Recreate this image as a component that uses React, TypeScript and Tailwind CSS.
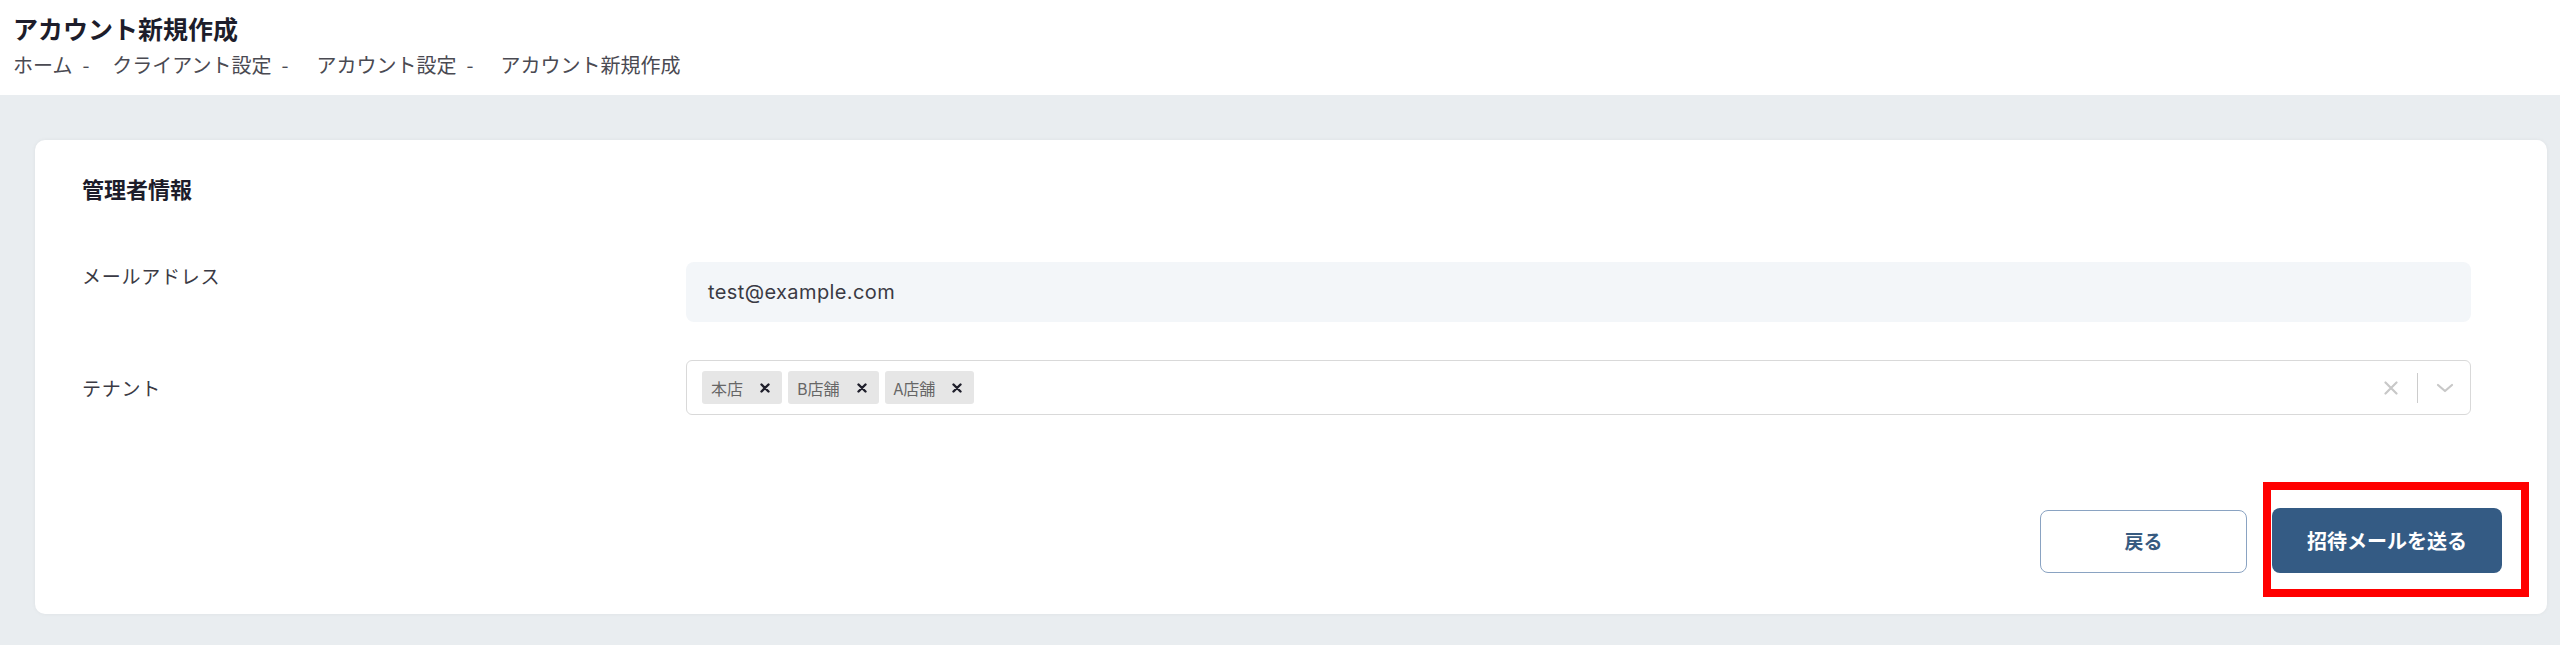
import React from 'react';

const tenants = ['本店', 'B店舗', 'A店舗'];

function ChipClose() {
    return (
        <svg width="10" height="10" viewBox="0 0 10 10" className="shrink-0">
            <path d="M1.5 1.5 L8.5 8.5 M8.5 1.5 L1.5 8.5" stroke="#1f1f2b" strokeWidth="2.4" strokeLinecap="round" />
        </svg>
    );
}

function TenantSelect() {
    return (
        <div className="flex-1 h-[55px] flex items-center border border-[#d9d9d9] rounded-[6px] bg-white pl-[15px] pr-[16px]">
            <div className="flex-1 flex items-center gap-[6px]">
                {tenants.map((t) => (
                    <span
                        key={t}
                        className="h-[33px] flex items-center bg-[#e6e6e6] rounded-[3px] pl-[9px] pr-[12px] text-[16px] text-[#666]"
                    >
                        <span className="mr-[17px]">{t}</span>
                        <ChipClose />
                    </span>
                ))}
            </div>
            {/* clear + dropdown indicators */}
            <svg width="14" height="14" viewBox="0 0 14 14" className="shrink-0">
                <path d="M1.5 1.5 L12.5 12.5 M12.5 1.5 L1.5 12.5" stroke="#c8c8c8" strokeWidth="2.2" strokeLinecap="round" />
            </svg>
            <span className="w-px h-[30px] bg-[#cccccc] ml-[19px] mr-[18px]" />
            <svg width="18" height="10" viewBox="0 0 18 10" className="shrink-0">
                <path d="M2 2 L9 8 L16 2" stroke="#c8c8c8" strokeWidth="2.2" fill="none" strokeLinecap="round" strokeLinejoin="round" />
            </svg>
        </div>
    );
}

export default function App() {
    return (
        <div
            className="w-[2560px] h-[645px] flex flex-col bg-[#e9edf0] text-[#2a2a35]"
            style={{ fontFamily: '"Noto Sans CJK JP", "Noto Sans", sans-serif' }}
        >
            <header className="h-[95px] shrink-0 bg-white pl-[13px] pt-[10px]">
                <h1 className="text-[25px] leading-[36px] font-bold text-[#1d1d2b]">アカウント新規作成</h1>
                <nav className="mt-[5px] text-[20px] leading-[28px] text-[#4a4a52] flex">
                    <span>ホーム</span>
                    <span className="ml-[10px] mr-[23px]">-</span>
                    <span>クライアント設定</span>
                    <span className="ml-[10px] mr-[28px]">-</span>
                    <span>アカウント設定</span>
                    <span className="ml-[10px] mr-[27px]">-</span>
                    <span>アカウント新規作成</span>
                </nav>
            </header>

            <main className="flex-1 pl-[35px] pr-[13px] pt-[45px] pb-[31px]">
                <section className="h-full bg-white rounded-[10px] shadow-[0_0_4px_rgba(0,0,0,0.05)] pl-[47px] pr-[45px] pt-[32px] pb-[41px] flex flex-col">
                    <h2 className="text-[22px] leading-[32px] font-bold text-[#1d1d2b]">管理者情報</h2>

                    <div className="mt-[58px] pr-[31px] flex items-start">
                        <div className="w-[604px] shrink-0 text-[19px] leading-[28px] tracking-[0.04em] text-[#3a3a44]">
                            メールアドレス
                        </div>
                        <div className="flex-1 h-[60px] flex items-center bg-[#f3f6f9] rounded-[8px] pl-[22px]">
                            <span className="text-[20px] tracking-[0.02em] text-[#3a3a44]" style={{ fontFamily: 'Inter, "Noto Sans", sans-serif' }}>
                                test@example.com
                            </span>
                        </div>
                    </div>

                    <div className="mt-[38px] pr-[31px] flex items-center">
                        <div className="w-[604px] shrink-0 text-[19px] leading-[28px] tracking-[0.04em] text-[#3a3a44]">
                            テナント
                        </div>
                        <TenantSelect />
                    </div>

                    <div className="mt-auto flex justify-end items-end gap-[25px]">
                        <button className="w-[207px] h-[63px] rounded-[8px] border border-[#8aa3c2] bg-white text-[19px] font-bold text-[#375a80]">
                            戻る
                        </button>
                        <span className="relative">
                            <button className="w-[230px] h-[65px] rounded-[8px] bg-[#345b84] text-[20px] font-bold text-white">
                                招待メールを送る
                            </button>
                            <span className="absolute -left-[9px] -right-[27px] -top-[26px] -bottom-[24px] border-[8px] border-[#ff0000] pointer-events-none" />
                        </span>
                    </div>
                </section>
            </main>
        </div>
    );
}
